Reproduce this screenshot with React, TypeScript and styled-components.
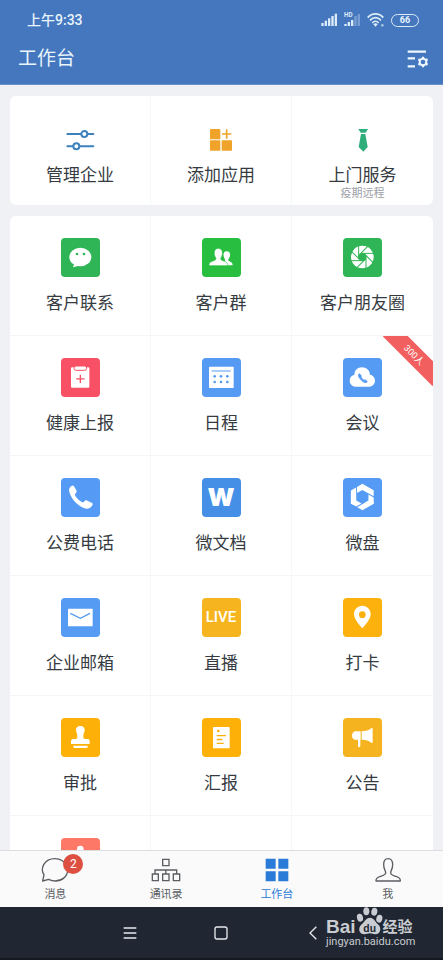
import React from "react";
import styled, { createGlobalStyle } from "styled-components";

const GlobalStyle = createGlobalStyle`
  *, *::before, *::after { box-sizing: border-box; }
  body {
    margin: 0;
    background: #eff1f4;
    font-family: Roboto, "Noto Sans CJK SC", sans-serif;
    color: #363b42;
  }
  button {
    margin: 0;
    padding: 0;
    border: 0;
    background: none;
    font: inherit;
    color: inherit;
    cursor: pointer;
  }
  svg { display: block; }
`;

const Screen = styled.div`
  display: flex;
  flex-direction: column;
  height: 100vh;
  overflow: hidden;
`;

const Header = styled.header`
  flex: none;
  background: #4477bd;
  border-bottom: 1px solid #6a8fc4;
  color: #e9f4fd;
`;

const StatusBar = styled.div`
  display: flex;
  align-items: center;
  justify-content: space-between;
  height: 40px;
  padding: 0 24px 0 27px;
`;

const Clock = styled.span`
  font-size: 14px;
  line-height: 20px;
  font-weight: 500;
`;

const StatusIcons = styled.div`
  display: flex;
  align-items: center;
  gap: 6px;
`;

const Battery = styled.span`
  display: flex;
  align-items: center;
  justify-content: center;
  width: 28px;
  height: 13px;
  border: 1px solid #dcebf8;
  border-radius: 7px;
  font-size: 9px;
  line-height: 11px;
  font-weight: 700;
`;

const TitleBar = styled.div`
  display: flex;
  align-items: center;
  justify-content: space-between;
  height: 44px;
  padding: 0 14px 6px 18px;
`;

const Title = styled.h1`
  margin: 0;
  font-size: 19px;
  line-height: 28px;
  font-weight: 400;
`;

const Content = styled.main`
  flex: 1;
  min-height: 0;
  overflow-y: auto;
  scrollbar-width: none;
  padding: 11px 10px;
  display: flex;
  flex-direction: column;
  gap: 11px;
  &::-webkit-scrollbar { display: none; }
`;

const Card = styled.section`
  flex: none;
  display: grid;
  grid-template-columns: repeat(3, 1fr);
  background: #fff;
  border-radius: 6px;
  overflow: hidden;
`;

const Cell = styled.button<{ $kind: "quick" | "app" }>`
  position: relative;
  overflow: hidden;
  display: flex;
  flex-direction: column;
  align-items: center;
  min-height: ${(p) => (p.$kind === "quick" ? 109 : 120)}px;
  padding-top: ${(p) => (p.$kind === "quick" ? 32 : 22)}px;
  border-right: 1px solid #f6f7f9;
  border-bottom: ${(p) => (p.$kind === "quick" ? "0" : "1px solid #f4f5f7")};
  &:nth-child(3n) { border-right: 0; }
`;

const Label = styled.span<{ $gap: number }>`
  margin-top: ${(p) => p.$gap}px;
  font-size: 17px;
  line-height: 24px;
`;

const SubLabel = styled.span`
  font-size: 11px;
  line-height: 14px;
  color: #9a9ea5;
`;

const Tile = styled.span<{ $color: string }>`
  display: flex;
  align-items: center;
  justify-content: center;
  width: 39px;
  height: 39px;
  border-radius: 4px;
  background: ${(p) => p.$color};
  color: ${(p) => p.$color};
`;

const WordMark = styled.span<{ $size: number; $weight: number }>`
  color: #fff;
  font-family: ${(p) => (p.$weight === 900 ? "Inter" : "Roboto")}, sans-serif;
  font-size: ${(p) => p.$size}px;
  line-height: 1;
  font-weight: ${(p) => p.$weight};
`;

const Ribbon = styled.span`
  position: absolute;
  top: 10px;
  right: -16px;
  width: 70px;
  height: 18px;
  transform: rotate(45deg);
  background: #f1605f;
  color: #fff;
  font-size: 9px;
  line-height: 18px;
  text-align: center;
`;

const TabBar = styled.nav`
  flex: none;
  display: grid;
  grid-template-columns: repeat(4, 1fr);
  height: 57px;
  background: #fafafa;
  border-top: 1px solid #dcdddf;
`;

const Tab = styled.button<{ $active?: boolean }>`
  display: flex;
  flex-direction: column;
  align-items: center;
  padding-top: 7px;
  gap: 5px;
  font-size: 11px;
  line-height: 16px;
  color: ${(p) => (p.$active ? "#2a7bd8" : "#5b5e63")};
`;

const TabIcon = styled.span`
  position: relative;
`;

const Badge = styled.span`
  position: absolute;
  top: -4px;
  left: 23px;
  width: 20px;
  height: 20px;
  border-radius: 50%;
  background: #dd4f41;
  color: #fff;
  font-size: 12px;
  line-height: 20px;
  text-align: center;
`;

const SystemBar = styled.footer`
  position: relative;
  flex: none;
  display: flex;
  justify-content: center;
  height: 53px;
  background: #202732;
  border-bottom: 2px solid #151a22;
`;

const SystemKeys = styled.div`
  display: grid;
  grid-template-columns: repeat(3, 1fr);
  width: 62%;
`;

const SystemKey = styled.button`
  display: flex;
  align-items: center;
  justify-content: center;
  color: #e6eaee;
`;

const Watermark = styled.div`
  position: absolute;
  top: 0;
  right: 28px;
  width: 89px;
  color: #c9ccd0;
`;

const Brand = styled.div`
  display: flex;
  align-items: flex-end;
  height: 28px;
  font-family: "Liberation Sans", "Noto Sans CJK SC", sans-serif;
  font-weight: 700;
`;

const BrandText = styled.span<{ $size: number }>`
  font-size: ${(p) => p.$size}px;
  line-height: 16px;
`;

const Site = styled.div`
  font-family: Roboto, sans-serif;
  font-size: 11px;
  line-height: 14px;
`;

/* Artwork for the coloured tiles, on a 117 unit square. */
const Art = ({ children }: { children: React.ReactNode }) => (
  <svg width="39" height="39" viewBox="0 0 117 117" fill="#fff" aria-hidden="true">
    {children}
  </svg>
);

const blades = Array.from({ length: 8 }, (_, i) => i * 45);

const art = {
  chat: (
    <Art>
      <ellipse cx="58" cy="57" rx="33" ry="28" />
      <path d="M40 76 36 88 54 83z" />
      <circle cx="48" cy="48" r="4" fill="currentColor" />
      <circle cx="69" cy="48" r="4" fill="currentColor" />
    </Art>
  ),
  group: (
    <Art>
      <path d="M60 82H92C92 73 87 72 80 69 78 67 79 64 80 62 87 53 86 40 74 40 63 40 62 53 68 62 69 65 70 67 68 69z" />
      <path
        d="M21 83C20 73 28 71 38 67 42 65 42 62 41 59 34 49 35 31 49 31 63 31 64 49 57 59 56 62 56 65 60 67 70 71 78 73 77 83z"
        stroke="currentColor"
        strokeWidth="2"
      />
    </Art>
  ),
  shutter: (
    <Art>
      <circle cx="58" cy="57" r="34" />
      <circle cx="58" cy="57" r="12" fill="currentColor" />
      {blades.map((a) => (
        <path
          key={a}
          d="M54 46H92"
          transform={`rotate(${a} 58 57)`}
          stroke="currentColor"
          strokeWidth="3"
        />
      ))}
    </Art>
  ),
  health: (
    <Art>
      <rect x="30" y="28" width="55" height="61" rx="3" />
      <rect x="39" y="24" width="38" height="13" rx="6" stroke="currentColor" strokeWidth="3" />
      <path d="M58 50v25M45.500 62.500h25" stroke="currentColor" strokeWidth="4" />
    </Art>
  ),
  calendar: (
    <Art>
      <rect x="21" y="26" width="74" height="64" rx="2" />
      <path d="M29 39h57" stroke="currentColor" strokeWidth="3" />
      <g fill="currentColor">
        {[38, 57, 76].map((x) => (
          <g key={x}>
            <circle cx={x} cy="55" r="4" />
            <circle cx={x} cy="72" r="4" />
          </g>
        ))}
      </g>
    </Art>
  ),
  cloud: (
    <Art>
      <path d="M39 86C28 86 20 78 20 68 20 58 26 52 34 51 34 37 44 28 57 28 70 28 80 37 81 50 89 51 96 58 96 68 96 78 88 86 77 86z" />
      <path
        d="M49 47C45 50 46 57 54 65 61 73 69 76 73 71L66 65C63 68 61 66 58 63 55 60 53 57 55 54z"
        fill="currentColor"
        stroke="currentColor"
        strokeWidth="3"
        strokeLinejoin="round"
      />
    </Art>
  ),
  phone: (
    <Art>
      <path d="M31 24C35 21 37 22 39 25L46 37C48 41 47 43 43 47 41 50 42 53 46 58 50 63 55 68 61 71 65 73 67 73 69 71 72 67 75 66 79 68L92 74C96 76 96 79 94 82 89 91 80 95 68 90 48 81 32 64 26 45 22 35 25 28 31 24z" />
    </Art>
  ),
  drive: (
    <Art>
      {[0, 120, 240].map((a) => (
        <path key={a} d="M42 27 58 17 92 37V55L58 36 42 45z" transform={`rotate(${a} 58 57)`} />
      ))}
    </Art>
  ),
  mail: (
    <Art>
      <rect x="21" y="32" width="74" height="53" rx="2" />
      <path d="M28 46 58 61 87 46" fill="none" stroke="currentColor" strokeWidth="4" />
    </Art>
  ),
  pin: (
    <Art>
      <path
        fillRule="evenodd"
        d="M58 23C44 23 33 34 33 48 33 63 47 78 58 91 69 78 83 63 83 48 83 34 72 23 58 23zM58 40a10 10 0 1 1 0 20 10 10 0 0 1 0-20z"
      />
    </Art>
  ),
  stamp: (
    <Art>
      <path d="M58 24C66 24 72 30 71 37 70 45 66 49 67 58 67 62 69 63 73 63H80C84 63 86 66 86 70V78H30V70C30 66 32 63 36 63H43C47 63 49 62 49 58 50 49 46 45 45 37 44 30 50 24 58 24z" />
      <path d="M37 83H80V86Q80 90 76 90H41Q37 90 37 86z" />
    </Art>
  ),
  report: (
    <Art>
      <rect x="33" y="27" width="50" height="64" rx="2" />
      <circle cx="49" cy="39" r="4" fill="currentColor" />
      <path d="M44 53h28M44 64.500h17M44 76h21" stroke="currentColor" strokeWidth="4" />
    </Art>
  ),
  horn: (
    <Art>
      <path d="M53 40V65H52V84Q51 88 48 88 45 88 45 84V65H38C31 65 27 59 27 53 27 46 32 40 38 40z" />
      <path d="M56 40C68 40 79 37 85 31Q89 28 89 33V73Q89 77 85 74C79 68 68 65 56 65z" />
    </Art>
  ),
  person: (
    <Art>
      <circle cx="58" cy="33" r="10" />
      <path d="M34 84V62C34 50 44 45 58 45 72 45 82 50 82 62V84z" />
    </Art>
  ),
};

const quickActions = [
  {
    label: "管理企业",
    icon: (
      <svg width="30" height="24" viewBox="0 0 90 72" fill="#fff" stroke="#3d82bd" strokeWidth="6" aria-hidden="true">
        <path d="M7 18H85M7 55H85" strokeLinecap="round" />
        <circle cx="58" cy="18" r="9" />
        <circle cx="34" cy="55" r="9" />
      </svg>
    ),
  },
  {
    label: "添加应用",
    icon: (
      <svg width="24" height="24" viewBox="0 0 72 72" fill="#f0a32b" aria-hidden="true">
        <rect x="3" y="3" width="31" height="31" rx="2" />
        <rect x="3" y="37" width="31" height="31" rx="2" />
        <rect x="38" y="37" width="31" height="31" rx="2" />
        <path d="M53 4v28M39 18h28" stroke="#f0a32b" strokeWidth="5" />
      </svg>
    ),
  },
  {
    label: "上门服务",
    sub: "疫期远程",
    icon: (
      <svg width="24" height="24" viewBox="0 0 72 72" fill="#2fae7b" aria-hidden="true">
        <path d="M22 3H51L44 14H29z" />
        <path d="M30 18H43L50 57 37 71 23 57z" />
      </svg>
    ),
  },
];

type AppEntry = { label?: string; color: string; art: React.ReactNode; ribbon?: string };

const apps: AppEntry[] = [
  { label: "客户联系", color: "#30b556", art: art.chat },
  { label: "客户群", color: "#28bf40", art: art.group },
  { label: "客户朋友圈", color: "#30b556", art: art.shutter },
  { label: "健康上报", color: "#f85165", art: art.health },
  { label: "日程", color: "#559bf3", art: art.calendar },
  { label: "会议", color: "#559bf3", art: art.cloud, ribbon: "300人" },
  { label: "公费电话", color: "#559bf5", art: art.phone },
  { label: "微文档", color: "#4590e6", art: <WordMark $size={25} $weight={900}>W</WordMark> },
  { label: "微盘", color: "#559bf5", art: art.drive },
  { label: "企业邮箱", color: "#559bf3", art: art.mail },
  { label: "直播", color: "#f6b51f", art: <WordMark $size={15} $weight={500}>LIVE</WordMark> },
  { label: "打卡", color: "#fcb10d", art: art.pin },
  { label: "审批", color: "#fdb108", art: art.stamp },
  { label: "汇报", color: "#fdb108", art: art.report },
  { label: "公告", color: "#f5b41f", art: art.horn },
  { color: "#fd7866", art: art.person },
];

const TabGlyph = ({ children }: { children: React.ReactNode }) => (
  <svg width="30" height="24" viewBox="0 0 90 72" fill="none" stroke="currentColor" strokeWidth="4" aria-hidden="true">
    {children}
  </svg>
);

const tabs = [
  {
    label: "消息",
    badge: "2",
    icon: (
      <TabGlyph>
        <path
          d="M8 69 12 50C6 42 6 30 11 20 18 8 30 2 44 2 65 2 83 17 83 36 83 55 66 69 46 69 38 69 32 67 26 64z"
          strokeLinejoin="round"
        />
      </TabGlyph>
    ),
  },
  {
    label: "通讯录",
    icon: (
      <TabGlyph>
        <path d="M35 4H54V23H35zM4 48H22V68H4zM35 48H54V68H35zM67 48H86V68H67zM12 48V36H77V48M44.500 36V48" />
      </TabGlyph>
    ),
  },
  {
    label: "工作台",
    active: true,
    icon: (
      <TabGlyph>
        <path
          d="M11 2H41V32H11zM49 2H79V32H49zM11 40H41V70H11zM49 40H79V70H49z"
          fill="currentColor"
          stroke="none"
        />
      </TabGlyph>
    ),
  },
  {
    label: "我",
    icon: (
      <TabGlyph>
        <path
          d="M9 69C8 61 12 58 22 55 32 52 39 51 38 43 37 38 32 32 32 20 32 8 37 2 45 2 54 2 59 8 59 20 59 32 54 38 53 43 52 51 59 52 69 55 79 58 83 61 82 69z"
          strokeLinejoin="round"
        />
      </TabGlyph>
    ),
  },
];

const bars = [0, 1, 2, 3, 4];

const Signal = ({ hd }: { hd?: boolean }) => (
  <svg width="17" height="16" viewBox="0 0 51 48" fill="#dcebf8" aria-hidden="true">
    {bars.map((i) => (
      <rect
        key={i}
        x={1 + i * 10}
        y={hd ? [36, 30, 24, 12, 6][i] : 33 - i * 7}
        width="7"
        height={hd ? [6, 12, 18, 30, 36][i] : 9 + i * 7}
        opacity={hd && i > 2 ? 0.35 : 1}
      />
    ))}
    {hd && (
      <text x="0" y="16" fontFamily="Roboto, sans-serif" fontSize="19" fontWeight="700">
        HD
      </text>
    )}
  </svg>
);

export default function App() {
  return (
    <>
      <GlobalStyle />
      <Screen>
        <Header>
          <StatusBar>
            <Clock>上午9:33</Clock>
            <StatusIcons>
              <Signal />
              <Signal hd />
              <svg width="18" height="14" viewBox="0 0 54 42" fill="none" stroke="#dcebf8" strokeWidth="5" aria-hidden="true">
                <path d="M2 14C15-1 36-1 49 14M9 22C19 11 32 11 42 22M16 30C22 23 29 23 35 30" />
                <path d="M19 34Q25.500 28 32 34L25.500 41z" fill="#dcebf8" stroke="none" />
                <circle cx="46" cy="37" r="4" fill="#a9c6e8" stroke="none" />
              </svg>
              <Battery>66</Battery>
            </StatusIcons>
          </StatusBar>
          <TitleBar>
            <Title>工作台</Title>
            <button type="button">
              <svg width="22" height="18" viewBox="0 0 66 54" fill="none" stroke="#eef7fe" strokeWidth="7" aria-hidden="true">
                <path d="M2 5H57M2 25H24M2 49H24" />
                <circle cx="48" cy="36" r="10" strokeWidth="6" />
                {[0, 60, 120].map((a) => (
                  <path key={a} d="M48 20V26M48 46V52" transform={`rotate(${a} 48 36)`} />
                ))}
              </svg>
            </button>
          </TitleBar>
        </Header>

        <Content>
          <Card>
            {quickActions.map((q) => (
              <Cell key={q.label} type="button" $kind="quick">
                {q.icon}
                <Label $gap={11}>{q.label}</Label>
                {q.sub && <SubLabel>{q.sub}</SubLabel>}
              </Cell>
            ))}
          </Card>
          <Card>
            {apps.map((a, i) => (
              <Cell key={i} type="button" $kind="app">
                <Tile $color={a.color}>{a.art}</Tile>
                {a.label && <Label $gap={14}>{a.label}</Label>}
                {a.ribbon && <Ribbon>{a.ribbon}</Ribbon>}
              </Cell>
            ))}
            <Cell as="div" $kind="app" />
            <Cell as="div" $kind="app" />
          </Card>
        </Content>

        <TabBar>
          {tabs.map((t) => (
            <Tab key={t.label} type="button" $active={t.active}>
              <TabIcon>
                {t.icon}
                {t.badge && <Badge>{t.badge}</Badge>}
              </TabIcon>
              {t.label}
            </Tab>
          ))}
        </TabBar>

        <SystemBar>
          <SystemKeys>
            <SystemKey type="button">
              <svg width="14" height="14" viewBox="0 0 42 42" stroke="currentColor" strokeWidth="4" aria-hidden="true">
                <path d="M2 6H40M2 21H40M2 36H40" />
              </svg>
            </SystemKey>
            <SystemKey type="button">
              <svg width="14" height="14" viewBox="0 0 42 42" fill="none" stroke="currentColor" strokeWidth="4" aria-hidden="true">
                <rect x="3" y="3" width="36" height="36" rx="6" />
              </svg>
            </SystemKey>
            <SystemKey type="button">
              <svg width="8" height="14" viewBox="0 0 24 42" fill="none" stroke="currentColor" strokeWidth="4" aria-hidden="true">
                <path d="M22 2 3 21 22 40" />
              </svg>
            </SystemKey>
          </SystemKeys>
          <Watermark>
            <Brand>
              <BrandText $size={19}>Bai</BrandText>
              <svg width="27" height="28" viewBox="0 0 81 84" fill="currentColor" aria-hidden="true">
                <ellipse cx="31" cy="13" rx="9" ry="12" />
                <ellipse cx="55" cy="14" rx="9" ry="12" transform="rotate(10 55 14)" />
                <ellipse cx="12" cy="32" rx="9" ry="12" transform="rotate(-15 12 32)" />
                <ellipse cx="70" cy="35" rx="9" ry="12" transform="rotate(15 70 35)" />
                <path d="M42 32C54 32 58 45 66 52 78 62 74 82 58 82 50 82 48 79 42 79 36 79 32 82 25 82 8 82 5 63 17 52 25 45 30 32 42 32z" />
                <text x="41" y="74" fill="#202732" fontFamily="Liberation Sans, sans-serif" fontSize="31" fontWeight="700" textAnchor="middle">
                  du
                </text>
              </svg>
              <BrandText $size={15}>经验</BrandText>
            </Brand>
            <Site>jingyan.baidu.com</Site>
          </Watermark>
        </SystemBar>
      </Screen>
    </>
  );
}
